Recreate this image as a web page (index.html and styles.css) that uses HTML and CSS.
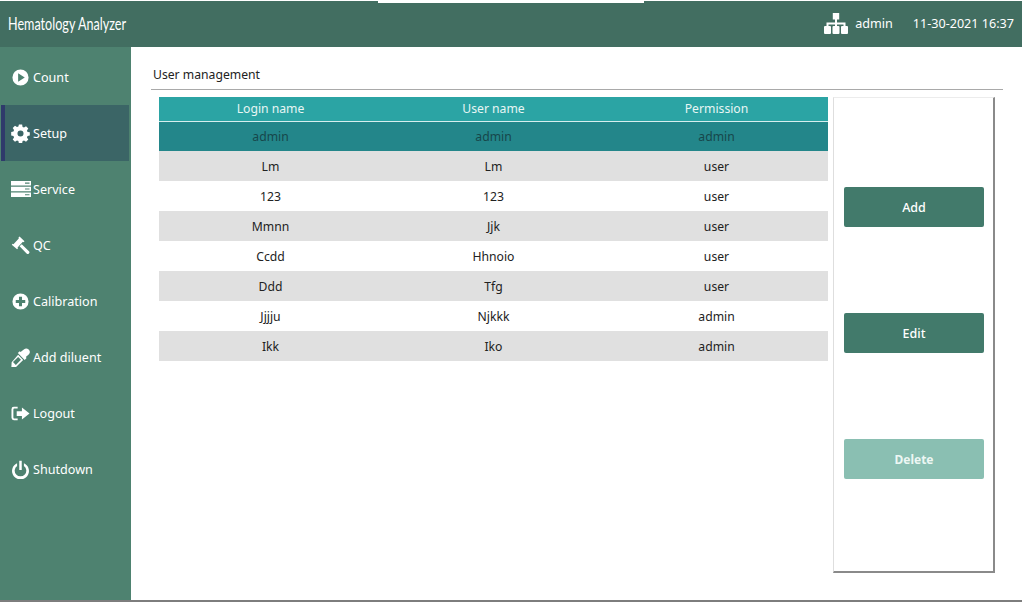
FILE: index.html
```html
<!DOCTYPE html>
<html lang="en">
<head>
<meta charset="utf-8">
<title>Hematology Analyzer</title>
<link rel="stylesheet" href="styles.css">
</head>
<body>
<div class="app">
  <div class="notch"></div>
  <header class="topbar">
    <div class="brand">Hematology Analyzer</div>
    <div class="status">
      <svg class="site-icon" viewBox="0 0 24 21"><path d="M8.800 0h6.400v6.500h-6.400zM11 6.500h2v3h8.500V13h-2v-1.500H13V13h-2v-1.500H4.500V13h-2V9.500H11z"/><rect x="0" y="13" width="7" height="8" rx="1"/><rect x="8.500" y="13" width="7" height="8" rx="1"/><rect x="17" y="13" width="7" height="8" rx="1"/></svg>
      <span class="user">admin</span>
      <span class="clock">11-30-2021 16:37</span>
    </div>
  </header>
  <div class="body">
    <nav class="sidebar">
      <a class="nav-item"><svg class="nav-icon" viewBox="0 0 20 20"><path fill-rule="evenodd" d="M10 1.500a8.500 8.500 0 1 1 0 17 8.500 8.500 0 0 1 0-17zM7.500 5.500v9l7-4.500z"/></svg>Count</a>
      <a class="nav-item active"><svg class="nav-icon" viewBox="0 0 20 20"><path fill-rule="evenodd" d="M8.300 1h3.400l.5 2.500 1.500.6 2.100-1.400 2.400 2.400-1.400 2.100.6 1.500 2.400.5v3.400l-2.400.5-.6 1.500 1.400 2.100-2.400 2.400-2.100-1.400-1.500.6-.5 2.400H8.300l-.5-2.400-1.500-.6-2.100 1.400-2.400-2.400 1.400-2.100-.6-1.500-2.400-.5V8.700l2.400-.5.600-1.500-1.400-2.100 2.400-2.400 2.100 1.400 1.500-.6zM10 7.200a3.200 3.200 0 1 0 0 6.400 3.200 3.200 0 0 0 0-6.400z" transform="translate(0 -.4)"/></svg>Setup</a>
      <a class="nav-item"><svg class="nav-icon wide" viewBox="0 0 20 16"><path fill-rule="evenodd" d="M0 0h20v4.400H0zM14 1.600v1.100h4.500V1.600zM0 5.800h20v4.400H0zM14 7.400v1.100h4.500V7.400zM0 11.600h20V16H0zM14 13.200v1.100h4.500v-1.100z"/></svg>Service</a>
      <a class="nav-item"><svg class="nav-icon" viewBox="0 0 20 20"><path d="M9 .6l5.200 4.800-1 1.100-.7-.5-5.600 6.100.5.800-1 1.100L.8 9.200l1-1.100.8.500 5.600-6.100-.3-.8z"/><path d="M11.300 8.600l7.600 7.400a1.700 1.700 0 0 1-2.500 2.400L9 10.900z"/></svg>QC</a>
      <a class="nav-item"><svg class="nav-icon" viewBox="0 0 20 20"><path fill-rule="evenodd" d="M10 1.500a8.500 8.500 0 1 1 0 17 8.500 8.500 0 0 1 0-17zM8.400 5v3.400H5v3.200h3.400V15h3.200v-3.400H15V8.400h-3.400V5z"/></svg>Calibration</a>
      <a class="nav-item"><svg class="nav-icon" viewBox="0 0 20 20"><path d="M13.500 1.700a3.600 3.600 0 0 1 5.100 5.100l-3 2.800.8.900-2 2-7.200-7.200 2-2 .9.800z"/><path fill-rule="evenodd" d="M7.500 7.200l5.300 5.300-7.500 7.400-4.900.1.300-4.900zM7.500 9.400l-5.400 5.400 3 3 5.400-5.400z"/></svg>Add diluent</a>
      <a class="nav-item"><svg class="nav-icon" viewBox="0 0 20 20"><path d="M7 3v1.800H3.500a1 1 0 0 0-1 1v8.400a1 1 0 0 0 1 1H7V17H3a2.500 2.500 0 0 1-2.500-2.500v-9A2.500 2.500 0 0 1 3 3zM11.500 3.800l8 6.200-8 6.200v-3.700H6V7.500h5.500z"/></svg>Logout</a>
      <a class="nav-item"><svg class="nav-icon" viewBox="0 0 20 20"><path d="M8.700.8h2.600v9.700H8.700zM6.400 3.400v2.800a6.100 6.100 0 1 0 7.200 0V3.400a8.900 8.900 0 1 1-7.200 0z"/></svg>Shutdown</a>
    </nav>
    <main class="content">
      <h1 class="page-title">User management</h1>
      <div class="workspace">
        <table class="users">
          <thead>
            <tr><th>Login name</th><th>User name</th><th>Permission</th></tr>
          </thead>
          <tbody>
            <tr class="selected"><td>admin</td><td>admin</td><td>admin</td></tr>
            <tr class="odd"><td>Lm</td><td>Lm</td><td>user</td></tr>
            <tr><td>123</td><td>123</td><td>user</td></tr>
            <tr class="odd"><td>Mmnn</td><td>Jjk</td><td>user</td></tr>
            <tr><td>Ccdd</td><td>Hhnoio</td><td>user</td></tr>
            <tr class="odd"><td>Ddd</td><td>Tfg</td><td>user</td></tr>
            <tr><td>Jjjju</td><td>Njkkk</td><td>admin</td></tr>
            <tr class="odd"><td>Ikk</td><td>Iko</td><td>admin</td></tr>
          </tbody>
        </table>
        <aside class="actions">
          <button class="btn">Add</button>
          <button class="btn">Edit</button>
          <button class="btn disabled">Delete</button>
        </aside>
      </div>
    </main>
  </div>
  <div class="bottom-line"></div>
</div>
</body>
</html>
```
FILE: styles.css
```css
* { box-sizing: border-box; }
html, body { margin: 0; padding: 0; }
body {
  width: 1022px;
  height: 602px;
  overflow: hidden;
  background: #fff;
  font-family: "Noto Sans", "Open Sans", sans-serif;
  color: #222;
}
.app {
  position: relative;
  width: 1022px;
  height: 602px;
  display: flex;
  flex-direction: column;
  padding-top: 1px;
}
.notch {
  position: absolute;
  left: 378px;
  top: 0;
  width: 266px;
  height: 3px;
  background: #fff;
}
.topbar {
  height: 46px;
  flex: none;
  background: #426e61;
  color: #fff;
  display: flex;
  align-items: center;
  justify-content: space-between;
  padding: 0 8px 1px 8px;
}
.brand {
  font-family: "Lato", sans-serif;
  font-size: 18px;
  font-weight: 400;
  transform-origin: left center;
  transform: scaleX(.7);
  white-space: nowrap;
  margin-top: -2px;
}
.status {
  display: flex;
  align-items: center;
  font-size: 12.600px;
  white-space: nowrap;
}
.site-icon {
  width: 24px;
  height: 21px;
  fill: #fff;
  margin-right: 7px;
}
.clock { margin-left: 20px; }
.body {
  flex: 1;
  min-height: 0;
  display: flex;
}
.sidebar {
  width: 131px;
  flex: none;
  background: #4e8270;
  padding-top: 2px;
  display: flex;
  flex-direction: column;
}
.nav-item {
  height: 56px;
  width: 128px;
  margin-left: 1px;
  display: flex;
  align-items: center;
  padding-left: 6px;
  border-left: 4px solid transparent;
  color: #fff;
  font-size: 12.600px;
}
.nav-item.active {
  background: #3b6566;
  border-left-color: #2f3a6b;
}
.nav-icon {
  width: 19px;
  height: 19px;
  fill: #fff;
  margin-right: 3px;
  flex: none;
}
.nav-icon.wide {
  width: 20px;
  height: 16px;
  margin-right: 2px;
}
.content {
  flex: 1;
  min-width: 0;
  padding: 18px 19px 0 20px;
}
.page-title {
  margin: 0 0 7px;
  height: 25px;
  font-size: 12.200px;
  font-weight: 400;
  line-height: 20px;
  color: #222;
  padding: 0 0 0 2px;
  border-bottom: 1px solid #a9a9a9;
}
.workspace {
  display: flex;
  align-items: flex-start;
  margin-left: 8px;
}
.users {
  width: 669px;
  border-collapse: collapse;
  table-layout: fixed;
  font-size: 12.200px;
}
.users th {
  height: 24px;
  padding: 0;
  background: #2ba4a4;
  color: #e8f6f4;
  font-weight: 400;
  border-bottom: 1px solid #d6eeee;
}
.users td {
  height: 30px;
  padding: 0;
  text-align: center;
  color: #222;
}
.users tr.odd td { background: #e0e0e0; }
.users tr.selected td { background: #23868a; color: #17474a; }
.actions {
  width: 162px;
  height: 476px;
  margin-left: 5px;
  border-top: 1px solid #ececec;
  border-left: 1px solid #dedede;
  border-right: 2px solid #8a8a8a;
  border-bottom: 2px solid #8a8a8a;
  padding: 89px 10px 0 10px;
  display: flex;
  flex-direction: column;
  gap: 86px;
}
.btn {
  width: 140px;
  height: 40px;
  border: 0;
  border-radius: 2px;
  background: #427a6b;
  color: #fff;
  font: 500 12.500px "Noto Sans", sans-serif;
  padding: 0;
}
.btn.disabled {
  background: #8abfb2;
  color: #edf7f4;
  font-size: 12px;
  font-weight: 700;
}
.bottom-line {
  height: 2px;
  flex: none;
  background: #7d7d7d;
}
```
